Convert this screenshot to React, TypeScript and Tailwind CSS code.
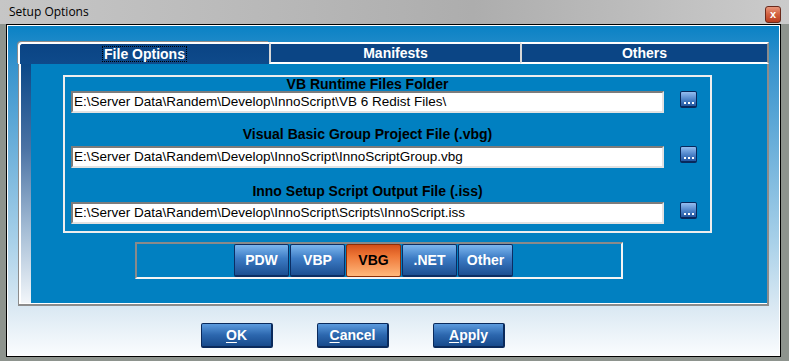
import { useState } from "react";

const sans = "font-['Liberation_Sans',Arial,sans-serif]";

function BrowseButton() {
  return (
    <button className="w-[17px] h-[17px] shrink-0 rounded-[2px] border border-[#08285c] border-b-2 bg-[linear-gradient(to_bottom,#93bdf0,#4c82c8_55%,#2356a0)] flex items-end justify-center gap-[2px] pb-[2px]">
      <span className="w-[2px] h-[2px] bg-white" />
      <span className="w-[2px] h-[2px] bg-white" />
      <span className="w-[2px] h-[2px] bg-white" />
    </button>
  );
}

function PathRow({
  label,
  value,
  labelTop,
  boxTop,
}: {
  label: string;
  value: string;
  labelTop: string;
  boxTop: string;
}) {
  return (
    <div className={labelTop}>
      <div className="w-[593px] ml-[6px] text-center text-[14px] leading-[14px] font-bold text-black whitespace-nowrap">
        {label}
      </div>
      <div className={`flex items-start ${boxTop}`}>
        <div className="ml-[6px] w-[593px] h-[22px] border-2 border-t-[#7c7c7c] border-l-[#7c7c7c] border-b-[#e2e2e2] border-r-[#e2e2e2] bg-white pl-[1px] flex items-center text-[13.5px] text-black whitespace-nowrap overflow-hidden">
          {value}
        </div>
        <div className="ml-[16px]">
          <BrowseButton />
        </div>
      </div>
    </div>
  );
}

export default function App() {
  const [tab, setTab] = useState(0);
  const [kind, setKind] = useState("VBG");
  const tabs = ["File Options", "Manifests", "Others"];
  const kinds = ["PDW", "VBP", "VBG", ".NET", "Other"];

  return (
    <div className={`w-[789px] h-[361px] flex flex-col bg-[#8e948e] ${sans}`}>
      {/* title bar */}
      <div className="h-[24px] flex items-start justify-between pl-[9px] pr-[8px] bg-[linear-gradient(to_right,#c6c6c6,#b8b8b8_35%,#adadad_60%,#cbcbcb)]">
        <span className="mt-[5px] text-[12px] leading-[14px] text-black font-['Open_Sans',sans-serif]">
          Setup Options
        </span>
        <button className="mt-[6px] w-[16px] h-[17px] rounded-[3px] border border-[#6a2a1c] bg-[linear-gradient(to_bottom,#e8957a,#d2603f_50%,#b83c1e)] flex items-center justify-center text-white text-[11px] font-bold leading-none">
          x
        </button>
      </div>

      {/* window frame */}
      <div className="flex-1 pl-[6px] pr-[8px] pb-[4px] flex">
        <div className="flex-1 border border-black flex">
          <div className="flex-1 border border-white flex flex-col pl-[10px] pt-[16px] bg-[linear-gradient(to_bottom,#0a82c5_0%,#3793cd_12%,#a9d1e9_66%,#dbe9f3_86%,#fafcfe_100%)]">
            {/* tab control */}
            <div className="w-[751px] flex flex-col">
              <div className="flex h-[22px]">
                {tabs.map((t, i) =>
                  i === tab ? (
                    <button
                      key={t}
                      onClick={() => setTab(i)}
                      className="w-[251px] h-[22px] rounded-tl-[4px] border-t-2 border-l-2 border-white bg-[linear-gradient(to_bottom,#0a4484,#0e4a8b)] flex items-center justify-center shadow-[-1px_-1px_0_#8c8c8c]"
                    >
                      <span className="border border-dotted border-black px-[1px] text-[14px] leading-[14px] font-bold text-white">
                        {t}
                      </span>
                    </button>
                  ) : (
                    <button
                      key={t}
                      onClick={() => setTab(i)}
                      className={`${i === 2 ? "w-[249px] border-r-2 border-r-[#8c8c8c]" : "w-[251px]"} h-[22px] border-t-2 border-white border-l-2 border-l-[#d8d8d8] border-b-2 border-b-white bg-[#0b4585] flex items-center justify-center text-[14px] leading-[14px] font-bold text-white`}
                    >
                      {t}
                    </button>
                  )
                )}
              </div>

              {/* tab page */}
              <div className="h-[242px] flex border-l border-l-[#8c8c8c] border-r-2 border-r-[#8c8c8c] border-b-2 border-b-[#8c8c8c]">
                <div className="flex-1 flex border-l-2 border-l-white border-b border-b-white bg-[linear-gradient(to_bottom,#0c4888,#4a72a4_35%,#a6bed6_70%,#f2f6fa)]">
                  <div className="flex-1 ml-[10px] bg-[#0180c1] flex flex-col pl-[32px] pt-[11px]">
                    {/* paths group */}
                    <div className="w-[649px] h-[158px] border-2 border-[#eeeeee]">
                      <PathRow
                        label="VB Runtime Files Folder"
                        value="E:\Server Data\Randem\Develop\InnoScript\VB 6 Redist Files\"
                        labelTop="mt-0"
                        boxTop="mt-0"
                      />
                      <PathRow
                        label="Visual Basic Group Project File (.vbg)"
                        value="E:\Server Data\Randem\Develop\InnoScript\InnoScriptGroup.vbg"
                        labelTop="mt-[14px]"
                        boxTop="mt-[5px]"
                      />
                      <PathRow
                        label="Inno Setup Script Output File (.iss)"
                        value="E:\Server Data\Randem\Develop\InnoScript\Scripts\InnoScript.iss"
                        labelTop="mt-[16px]"
                        boxTop="mt-[4px]"
                      />
                    </div>

                    {/* project type group */}
                    <div className="ml-[72px] mt-[9px] w-[488px] h-[37px] border-2 border-t-[#8a8a8a] border-l-[#8a8a8a] border-b-[#f4f4f4] border-r-[#f4f4f4] flex pl-[97px] gap-[1px]">
                      {kinds.map((k) =>
                        k === kind ? (
                          <button
                            key={k}
                            onClick={() => setKind(k)}
                            className="w-[55px] h-[33px] rounded-[2px] border border-[#8c2c06] bg-[linear-gradient(to_bottom,#d4501a,#ee7636_35%,#ffb87c)] text-[14px] font-bold text-black"
                          >
                            {k}
                          </button>
                        ) : (
                          <button
                            key={k}
                            onClick={() => setKind(k)}
                            className="w-[55px] h-[33px] rounded-[2px] border border-[#0b2d63] border-b-2 bg-[linear-gradient(to_bottom,#7cb6ee,#3c7bc4_45%,#1c4f92)] text-[14px] font-bold text-white"
                          >
                            {k}
                          </button>
                        )
                      )}
                    </div>
                  </div>
                </div>
              </div>
            </div>

            {/* dialog buttons */}
            <div className="flex gap-[44px] pl-[183px] mt-[17px]">
              {[
                ["O", "K"],
                ["C", "ancel"],
                ["A", "pply"],
              ].map(([a, b]) => (
                <button
                  key={a + b}
                  className="w-[72px] h-[25px] rounded-[2px] border border-[#0a2a5c] border-b-2 border-r-2 bg-[linear-gradient(to_bottom,#5c9bde,#2c67ae_50%,#174a8c)] text-[14px] font-bold text-white"
                >
                  <span className="underline underline-offset-2">{a}</span>
                  {b}
                </button>
              ))}
            </div>
          </div>
        </div>
      </div>
    </div>
  );
}
